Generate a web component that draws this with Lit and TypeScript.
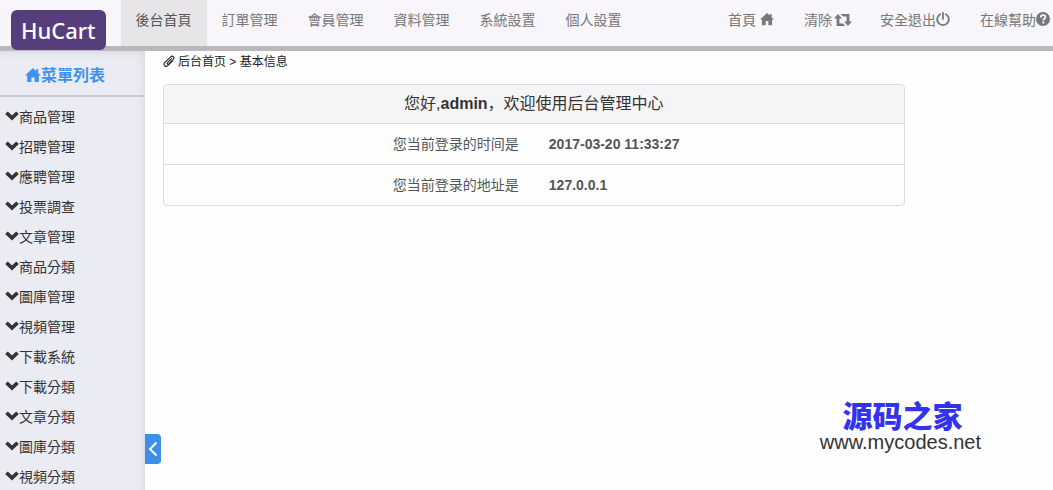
import { LitElement, html, css, svg } from "lit";
import { customElement, property } from "lit/decorators.js";

const shapes: Record<string, { box: string; body: unknown }> = {
  home: {
    box: "0 0 16 14",
    body: svg`<path d="M8 0 0 7.6h2.2V14h4.2V9.4h3.2V14h4.2V7.6H16l-2.8-2.7V1.2h-2.1v1.7z"/>`,
  },
  retweet: {
    box: "0 0 18 12",
    body: svg`<path d="M4 0 0 4.6h2.6V12h8.6L9 9.5H5.4V4.6H8zM6.8 0h8.6v7.4H18L14 12l-4-4.6h2.6V2.5H9z"/>`,
  },
  power: {
    box: "0 0 14 14",
    body: svg`<g fill="none" stroke="currentColor" stroke-width="1.8" stroke-linecap="round"><path d="M4.2 2.2a5.8 5.8 0 1 0 5.6 0"/><path d="M7 1v6"/></g>`,
  },
  help: {
    box: "0 0 14 14",
    body: svg`<circle cx="7" cy="7" r="7"/><path d="M4.8 5.4C4.8 2.4 9.4 2.4 9.4 5.1c0 1.7-2.1 1.7-2.1 3.5" fill="none" stroke="#f8f6fa" stroke-width="1.8"/><path d="M6.3 9.6h2v1.9h-2z" fill="#f8f6fa"/>`,
  },
  chevron: {
    box: "0 0 14 10",
    body: svg`<path d="M2.8.4 7 4.4 11.2.4 13.8 3 7 9.6.2 3z"/>`,
  },
  clip: {
    box: "0 0 14 14",
    body: svg`<path d="M10 4.2 5.3 9c-1.3 1.3.2 2.7 1.5 1.5L12 5.1c2-2.2-.9-5-3-2.900L2.2 8.600C-.6 11.600 2.900 14.900 5.900 12l5.200-5.300" fill="none" stroke="currentColor" stroke-width="1.300" stroke-linecap="round"/>`,
  },
  left: {
    box: "0 0 10 16",
    body: svg`<path d="M8.5 1.5 2 8l6.5 6.5" fill="none" stroke="currentColor" stroke-width="2"/>`,
  },
};

@customElement("glyph-icon")
export class GlyphIcon extends LitElement {
  @property() name = "home";

  static styles = css`
    :host {
      display: inline-flex;
      flex: none;
    }
    .shape {
      display: block;
      width: 100%;
      height: 100%;
      fill: currentColor;
    }
  `;

  render() {
    const s = shapes[this.name];
    return html`<svg class="shape" viewBox=${s.box} aria-hidden="true">${s.body}</svg>`;
  }
}

@customElement("app-root")
export class AppRoot extends LitElement {
  private tabs = ["後台首頁", "訂單管理", "會員管理", "資料管理", "系統設置", "個人設置"];

  private tools = [
    { text: "首頁", icon: "home" },
    { text: "清除", icon: "retweet" },
    { text: "安全退出", icon: "power" },
    { text: "在線幫助", icon: "help" },
  ];

  private menu = [
    "商品管理", "招聘管理", "應聘管理", "投票調查", "文章管理", "商品分類", "圖庫管理",
    "視頻管理", "下載系統", "下載分類", "文章分類", "圖庫分類", "視頻分類",
  ];

  static styles = css`
    :host {
      display: flex;
      flex-direction: column;
      position: relative;
      height: 100vh;
      overflow: hidden;
      background: #fefefe;
      color: #333;
      font: 14px/20px "Liberation Sans", "Noto Sans CJK TC", sans-serif;
    }
    a {
      color: inherit;
      text-decoration: none;
    }
    ul {
      list-style: none;
      margin: 0;
      padding: 0;
    }
    .bar {
      display: flex;
      flex: none;
      background: #f8f6fa;
      border-bottom: 5px solid #bab8bb;
      color: #777;
      white-space: nowrap;
    }
    .logo {
      align-self: flex-start;
      margin: 10px 15px -5px 11px;
      padding: 0 10px;
      border-radius: 6px;
      background: #563d7c;
      color: #fff;
      font: 500 22px/40px "Noto Sans", "Open Sans", sans-serif;
      z-index: 1;
    }
    .tabs,
    .tools {
      display: flex;
    }
    .tools {
      margin-left: auto;
      padding-right: 3px;
      gap: 30px;
    }
    .tab {
      display: block;
      padding: 10px 15px 16px;
    }
    .tab.active {
      background: #e7e5e8;
      color: #555;
    }
    .tool {
      display: flex;
      align-items: center;
      padding: 10px 0 16px;
    }
    .tool glyph-icon {
      width: 14px;
      height: 14px;
      margin-bottom: 2px;
    }
    .tool .home {
      margin-left: 4px;
    }
    .tool .retweet {
      width: 18px;
      height: 12px;
      margin: 0 -2px 0 2px;
    }
    .body {
      display: flex;
      flex: 1;
      min-height: 0;
    }
    .side {
      flex: none;
      width: 145px;
      overflow: hidden;
      background: #ebebf4;
      box-shadow: inset -6px 6px 10px -6px #d2d2d6;
    }
    .side-title {
      display: flex;
      align-items: center;
      margin: 0 0 5px;
      padding: 13px 15px 7px 25px;
      border-bottom: 2px solid #cccbd3;
      color: #3f93ec;
      font-size: 16px;
      font-weight: 700;
      line-height: 24px;
    }
    .side-title glyph-icon {
      width: 16px;
      height: 16px;
      margin-bottom: 2px;
    }
    .entry {
      display: flex;
      align-items: center;
      padding-left: 5px;
      line-height: 30px;
    }
    .entry glyph-icon {
      width: 14px;
      height: 10px;
      margin-bottom: 2px;
    }
    .toggle {
      align-self: flex-end;
      display: flex;
      align-items: center;
      justify-content: center;
      width: 16px;
      height: 30px;
      margin: 0 2px 26px 0;
      padding: 0;
      border: 0;
      border-radius: 0 4px 4px 0;
      background: #3f8fe8;
      color: #fff;
    }
    .toggle glyph-icon {
      width: 10px;
      height: 16px;
    }
    .main {
      flex: 1;
      min-width: 0;
      font-family: "Liberation Sans", "Noto Sans CJK SC", sans-serif;
    }
    .crumbs {
      display: flex;
      align-items: center;
      gap: 3px;
      padding-top: 1px;
      margin-bottom: 12px;
      font-size: 12px;
      color: #222;
    }
    .crumbs glyph-icon {
      width: 12px;
      height: 12px;
      margin-bottom: 2px;
    }
    .panel {
      max-width: calc(100% * 5 / 6);
      box-sizing: border-box;
      border: 1px solid #dddbe0;
      border-radius: 4px;
      overflow: hidden;
    }
    .info {
      width: 100%;
      table-layout: fixed;
      border-collapse: collapse;
      color: #555;
    }
    .info th,
    .info td {
      padding: 10px 15px;
      text-align: left;
    }
    .info tbody tr {
      border-top: 1px solid #dddbe0;
    }
    .info .title {
      padding: 9px 15px;
      background: #f5f4f6;
      color: #333;
      font-size: 16px;
      font-weight: 400;
      text-align: center;
    }
    .info .label {
      font-weight: 400;
      text-align: right;
    }
    .info .value {
      font-weight: 700;
    }
    .mark {
      position: absolute;
      right: 72px;
      bottom: 37px;
      text-align: center;
      color: #333;
      font: 20px/22px "Liberation Sans", sans-serif;
    }
    .mark-name {
      display: block;
      padding-left: 4px;
      color: #33e;
      font: 900 30px/28px "Liberation Sans", "Noto Sans CJK SC", sans-serif;
    }
  `;

  render() {
    return html`
      <header class="bar">
        <a class="logo" href="#">HuCart</a>
        <nav>
          <ul class="tabs">
            ${this.tabs.map(
              (t, i) => html`<li><a class="tab ${i === 0 ? "active" : ""}" href="#">${t}</a></li>`
            )}
          </ul>
        </nav>
        <ul class="tools">
          ${this.tools.map(
            (t) => html`<li>
              <a class="tool" href="#">${t.text}<glyph-icon class=${t.icon} name=${t.icon}></glyph-icon></a>
            </li>`
          )}
        </ul>
      </header>
      <div class="body">
        <aside class="side">
          <h2 class="side-title"><glyph-icon name="home"></glyph-icon>菜單列表</h2>
          <ul>
            ${this.menu.map(
              (m) => html`<li><a class="entry" href="#"><glyph-icon name="chevron"></glyph-icon>${m}</a></li>`
            )}
          </ul>
        </aside>
        <button class="toggle" type="button" aria-label="收起菜單">
          <glyph-icon name="left"></glyph-icon>
        </button>
        <main class="main" lang="zh-CN">
          <div class="crumbs"><glyph-icon name="clip"></glyph-icon><span>后台首页 &gt; 基本信息</span></div>
          <div class="panel">
            <table class="info">
              <thead>
                <tr><th class="title" colspan="2">您好,<b>admin</b>，欢迎使用后台管理中心</th></tr>
              </thead>
              <tbody>
                <tr><th class="label" scope="row">您当前登录的时间是</th><td class="value">2017-03-20 11:33:27</td></tr>
                <tr><th class="label" scope="row">您当前登录的地址是</th><td class="value">127.0.0.1</td></tr>
              </tbody>
            </table>
          </div>
        </main>
      </div>
      <div class="mark"><span class="mark-name">源码之家</span>www.mycodes.net</div>
    `;
  }
}
